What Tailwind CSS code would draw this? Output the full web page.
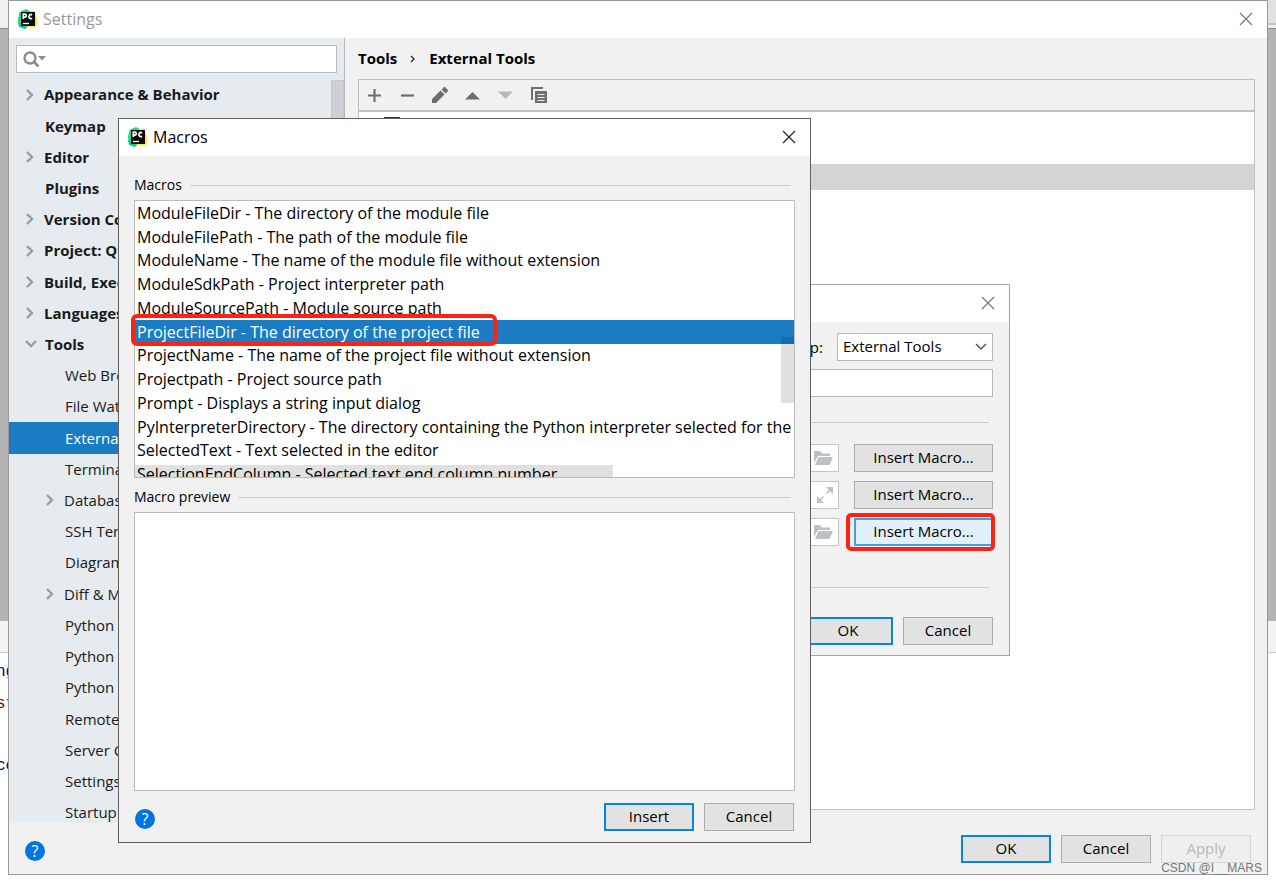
<!DOCTYPE html>
<html lang="en">
<head>
<meta charset="utf-8">
<title>Settings</title>
<script src="https://cdn.jsdelivr.net/npm/@tailwindcss/browser@4"></script>
</head>
<body class="relative h-screen overflow-hidden bg-white font-['Open_Sans','Noto_Sans',sans-serif] text-[15px] text-black">

<svg class="hidden" aria-hidden="true">
  <symbol id="pc" viewBox="0 0 20 20">
    <path d="M1.500 3 8 0l5 3-2 12-4 5-6-3L0 10z" fill="#21d789"/>
    <path d="M11 3l5-2 2 5 2 8-3 5-6-1-4 1 2-4z" fill="#f5ee3c"/>
    <path d="M0 13l6 1 3 4-2 2-6-2z" fill="#16c6a0"/>
    <rect x="3" y="3" width="14" height="14" fill="#0b0b0b"/>
    <path d="M5.300 10V5.200h1.500a1.400 1.400 0 0 1 0 2.900H5.400M14 6a2 2 0 1 0 0 3.200" fill="none" stroke="#fff" stroke-width="1.700"/>
    <path d="M5 14.500h6" stroke="#fff" stroke-width="1.300"/>
  </symbol>
  <symbol id="x" viewBox="0 0 14 14"><path d="M1 1l12 12M13 1 1 13" stroke="currentColor" stroke-width="1.200" fill="none"/></symbol>
  <symbol id="right" viewBox="0 0 8 12"><path d="M1 1l5 5-5 5" stroke="#9a9da0" stroke-width="2.400" fill="none"/></symbol>
  <symbol id="down" viewBox="0 0 12 8"><path d="M1 1l5 5 5-5" stroke="#9a9da0" stroke-width="2.400" fill="none"/></symbol>
  <symbol id="folder" viewBox="0 0 19 14"><path d="M0 0h6l2 2.500h8v2.500H4L0 12z" fill="#bcc1c5"/><path d="M4.500 6H19l-3.500 8H1z" fill="#bcc1c5"/></symbol>
</svg>

<!-- editor behind the windows -->
<div class="absolute inset-0 flex flex-col font-['Liberation_Mono',monospace] text-base" aria-hidden="true">
  <div class="flex h-7 justify-between bg-[#f0f0f0]"><span></span><span class="h-[25px] w-2 border-b-2 border-[#c4c4c4] bg-[#e2e2e2]"></span></div>
  <div class="h-[593px] border-t border-[#8c8c8c] bg-[#b4b4b4]"></div>
  <div class="h-8 border-b border-[#c9c9c9] bg-[#f3f3f3]"></div>
  <div class="flex w-2 flex-1 flex-col overflow-hidden pt-[3px]">
    <div class="-ml-1 h-8 text-[#000080] leading-8">ng</div>
    <div class="-ml-1 h-8 text-[#800000] leading-8">st</div>
    <div class="mt-[30px] -ml-1 h-8 text-[#000080] leading-8">co</div>
  </div>
</div>

<!-- Settings window -->
<section class="absolute inset-x-2 top-0 bottom-2 flex flex-col border border-[#999] bg-[#f1f1f1]">
  <header class="flex h-[37px] shrink-0 items-center bg-white pr-[14px] pb-px pl-[9px]">
    <svg class="size-5"><use href="#pc"/></svg>
    <h1 class="ml-[5px] flex-1 text-base text-[#999]">Settings</h1>
    <button aria-label="Close settings" class="text-[#777]"><svg class="size-[14px]"><use href="#x"/></svg></button>
  </header>
  <div class="flex min-h-0 flex-1">
    <nav class="relative flex w-[336px] shrink-0 flex-col overflow-hidden border-r border-[#b5b7b9] bg-[#e6ebef] text-[#1a1a1a]">
      <label class="mx-[7px] mt-[7px] flex h-7 shrink-0 items-center border border-[#b8bcbf] bg-white pl-[6px]">
        <svg class="h-4 w-[24px]" viewBox="0 0 24 16"><circle cx="7" cy="7" r="5.500" fill="none" stroke="#8c8c8c" stroke-width="2.400"/><path d="M11 11l4.500 4.500" stroke="#8c8c8c" stroke-width="2.600"/><path d="M15 5h8l-4 4.500z" fill="#8c8c8c"/></svg>
        <input aria-label="Search settings" class="min-w-0 flex-1 outline-none">
      </label>
      <ul class="-mb-[5px] mt-[6px] grid flex-1 auto-rows-fr whitespace-nowrap">
        <li class="flex items-center pl-[17px] font-bold"><svg class="mr-[10px] h-3 w-2"><use href="#right"/></svg>Appearance &amp; Behavior</li>
        <li class="flex items-center pl-9 font-bold">Keymap</li>
        <li class="flex items-center pl-[17px] font-bold"><svg class="mr-[10px] h-3 w-2"><use href="#right"/></svg>Editor</li>
        <li class="flex items-center pl-9 font-bold">Plugins</li>
        <li class="flex items-center pl-[17px] font-bold"><svg class="mr-[10px] h-3 w-2"><use href="#right"/></svg>Version Control</li>
        <li class="flex items-center pl-[17px] font-bold"><svg class="mr-[10px] h-3 w-2"><use href="#right"/></svg>Project: Qt</li>
        <li class="flex items-center pl-[17px] font-bold"><svg class="mr-[10px] h-3 w-2"><use href="#right"/></svg>Build, Execution, Deployment</li>
        <li class="flex items-center pl-[17px] font-bold"><svg class="mr-[10px] h-3 w-2"><use href="#right"/></svg>Languages &amp; Frameworks</li>
        <li class="flex items-center pl-4 font-bold"><svg class="mr-2 h-2 w-3"><use href="#down"/></svg>Tools</li>
        <li class="flex items-center pl-14">Web Browsers</li>
        <li class="flex items-center pl-14">File Watchers</li>
        <li class="flex items-center bg-[#1b7cc3] pl-14 text-white">External Tools</li>
        <li class="flex items-center pl-14">Terminal</li>
        <li class="flex items-center pl-[37px]"><svg class="mr-[10px] h-3 w-2"><use href="#right"/></svg>Database</li>
        <li class="flex items-center pl-14">SSH Terminal</li>
        <li class="flex items-center pl-14">Diagrams</li>
        <li class="flex items-center pl-[37px]"><svg class="mr-[10px] h-3 w-2"><use href="#right"/></svg>Diff &amp; Merge</li>
        <li class="flex items-center pl-14">Python</li>
        <li class="flex items-center pl-14">Python</li>
        <li class="flex items-center pl-14">Python</li>
        <li class="flex items-center pl-14">Remote</li>
        <li class="flex items-center pl-14">Server Certificates</li>
        <li class="flex items-center pl-14">Settings Repository</li>
        <li class="flex items-center pl-14">Startup Tasks</li>
      </ul>
      <div class="absolute top-[42px] right-0 h-[200px] w-[13px] border border-[#c4c8cb] bg-[#cdd1d5]"></div>
    </nav>
    <main class="flex min-w-0 flex-1 flex-col pr-3 pb-[13px] pl-[13px]">
      <h2 class="flex h-[41px] items-center font-bold">Tools<svg class="mx-[13px] h-2 w-[6px]" viewBox="0 0 6 8"><path d="M1 1l3 3-3 3" fill="none" stroke="#222" stroke-width="1.300"/></svg>External Tools</h2>
      <div class="flex h-8 shrink-0 items-center gap-[17px] border border-[#c0c0c0] pl-[7px] text-[#6e6e6e]">
        <button aria-label="Add"><svg class="size-4" viewBox="0 0 16 16"><path d="M8.500 2v13M2 8.500h13" stroke="currentColor" stroke-width="2.200"/></svg></button>
        <button aria-label="Remove"><svg class="size-4" viewBox="0 0 16 16"><path d="M2 8.500h13" stroke="currentColor" stroke-width="2.200"/></svg></button>
        <button aria-label="Edit"><svg class="size-4" viewBox="0 0 16 16"><path d="M0 16v-4l8.500-8.500 4 4L4 16zM9.500 2.500 12 0h1l3 3v1l-2.500 2.500z" fill="currentColor"/></svg></button>
        <button aria-label="Move up"><svg class="size-4" viewBox="0 0 16 16"><path d="M0 12.500 7.500 5 15 12.500z" fill="currentColor"/></svg></button>
        <button aria-label="Move down" class="text-[#b9b9b9]"><svg class="size-4" viewBox="0 0 16 16"><path d="M0 4.500h15L7.500 12z" fill="currentColor"/></svg></button>
        <button aria-label="Copy"><svg class="size-4" viewBox="0 0 16 16"><path d="M1 13V1h11" fill="none" stroke="currentColor" stroke-width="2"/><path d="M4 4h12v12H4z" fill="currentColor"/><path d="M6.500 7.500h7M6.500 10.500h7M6.500 13.500h7" stroke="#f1f1f1" stroke-width="1"/></svg></button>
      </div>
      <div class="flex-1 border border-[#c0c0c0] bg-white">
        <div class="h-[52px] pt-[5px] pl-[25px]"><div class="size-4 border-2 border-[#333]"></div></div>
        <div class="h-[26px] bg-[#d4d4d4]"></div>
      </div>
    </main>
  </div>
  <footer class="flex h-[51px] shrink-0 items-center gap-[10px] px-4">
    <button aria-label="Settings help" class="mt-1 mr-auto size-5 rounded-full bg-[#0074df] text-base leading-5 text-white">?</button>
    <button class="h-7 w-[90px] border-2 border-[#0a84e0] bg-[#e2e2e2] pb-px">OK</button>
    <button class="h-7 w-[90px] border border-[#adadad] bg-[#e2e2e2] pb-px">Cancel</button>
    <button disabled class="h-7 w-[90px] border border-[#d4d4d4] bg-[#efefef] pb-px text-[#b9b9b9]">Apply</button>
  </footer>
</section>
<p class="absolute right-[14px] bottom-[7px] font-['Liberation_Sans',sans-serif] text-xs leading-4 text-[#777]">CSDN @I__MARS</p>

<!-- Edit tool window -->
<section class="absolute top-[284px] left-[600px] flex w-[410px] flex-col border border-[#a5a5a5] bg-[#f1f1f1]">
  <header class="flex h-[37px] items-center justify-end bg-white pr-[14px] pb-px">
    <button aria-label="Close tool editor" class="text-[#777]"><svg class="size-[14px]"><use href="#x"/></svg></button>
  </header>
  <div class="flex flex-col pt-[11px] pr-4 pb-[10px]">
    <div class="flex items-center justify-end gap-[14px]">
      <label for="group">Group:</label>
      <span class="relative flex w-[156px]">
        <select id="group" class="h-7 w-full appearance-none border border-[#b8b8b8] bg-white pb-px pl-[5px]"><option>External Tools</option></select>
        <svg class="pointer-events-none absolute top-[10px] right-[6px] h-2 w-3" viewBox="0 0 12 8"><path d="M1 1l5 5 5-5" fill="none" stroke="#555" stroke-width="1.500"/></svg>
      </span>
    </div>
    <input aria-label="Description" class="mt-2 h-7 border border-[#b8b8b8] bg-white">
    <div class="mt-[25px] mr-1 h-px bg-[#ccc]"></div>
    <div class="mt-[21px] grid grid-cols-[1fr_139px] gap-x-[15px] gap-y-[9px]">
      <div class="flex h-7 items-center justify-end border border-[#c4c4c4] bg-white pr-[5px]"><svg class="h-[14px] w-[19px]"><use href="#folder"/></svg></div>
      <button class="h-7 border border-[#adadad] bg-[#e2e2e2] pb-px">Insert Macro...</button>
      <div class="flex h-7 items-center justify-end border border-[#c4c4c4] bg-white pr-[5px]"><svg class="size-4" viewBox="0 0 16 16"><path d="M9.500 6.500l4-4M6.500 9.500l-4 4" fill="none" stroke="#bcc1c5" stroke-width="1.600"/><path d="M9 0h7v7zM0 9v7h7z" fill="#bcc1c5"/></svg></div>
      <button class="h-7 border border-[#adadad] bg-[#e2e2e2] pb-px">Insert Macro...</button>
      <div class="flex h-7 items-center justify-end border border-[#c4c4c4] bg-white pr-[5px]"><svg class="h-[14px] w-[19px]"><use href="#folder"/></svg></div>
      <div class="relative flex">
        <button class="h-7 w-full border-2 border-[#4a9de0] bg-[#e2f0fa] pb-px">Insert Macro...</button>
        <div class="pointer-events-none absolute -top-[5px] -right-[2px] -bottom-[5px] -left-[8px] rounded-[5px] border-4 border-[#fb2414]"></div>
      </div>
    </div>
    <div class="mt-[41px] mr-1 h-px bg-[#ccc]"></div>
    <div class="mt-[29px] flex justify-end gap-[10px]">
      <button class="h-7 w-[90px] border-2 border-[#0a84e0] bg-[#e2e2e2] pb-px">OK</button>
      <button class="h-7 w-[90px] border border-[#adadad] bg-[#e2e2e2] pb-px">Cancel</button>
    </div>
  </div>
</section>

<!-- Macros window -->
<section class="absolute top-[118px] left-[118px] flex h-[725px] w-[693px] flex-col border border-[#5f5f5f] bg-[#f1f1f1]">
  <header class="flex h-[37px] shrink-0 items-center bg-white pr-[14px] pb-px pl-[9px]">
    <svg class="size-5"><use href="#pc"/></svg>
    <h1 class="ml-[5px] flex-1 text-base">Macros</h1>
    <button aria-label="Close macros" class="text-[#222]"><svg class="size-[14px]"><use href="#x"/></svg></button>
  </header>
  <div class="flex min-h-0 flex-1 flex-col px-[15px] pt-5">
    <h2 class="flex h-[18px] shrink-0 items-center gap-2 pr-1 text-sm">Macros<span class="h-px flex-1 bg-[#ccc]"></span></h2>
    <div class="relative mt-[6px] flex-1">
      <div class="flex h-full flex-col overflow-hidden border border-[#bbb] bg-white">
        <ul class="-mb-[9px] grid flex-1 auto-rows-fr text-base leading-5 whitespace-nowrap">
          <li class="flex items-center pl-[2px]">ModuleFileDir - The directory of the module file</li>
          <li class="flex items-center pl-[2px]">ModuleFilePath - The path of the module file</li>
          <li class="flex items-center pl-[2px]">ModuleName - The name of the module file without extension</li>
          <li class="flex items-center pl-[2px]">ModuleSdkPath - Project interpreter path</li>
          <li class="flex items-center pl-[2px]">ModuleSourcePath - Module source path</li>
          <li class="flex items-center bg-[#1b7cc3] pl-[2px] text-white">ProjectFileDir - The directory of the project file</li>
          <li class="flex items-center pl-[2px]">ProjectName - The name of the project file without extension</li>
          <li class="flex items-center pl-[2px]">Projectpath - Project source path</li>
          <li class="flex items-center pl-[2px]">Prompt - Displays a string input dialog</li>
          <li class="flex items-center pl-[2px]">PyInterpreterDirectory - The directory containing the Python interpreter selected for the project</li>
          <li class="flex items-center pl-[2px]">SelectedText - Text selected in the editor</li>
          <li class="flex items-center pl-[2px]">SelectionEndColumn - Selected text end column number</li>
        </ul>
      </div>
      <div class="absolute right-[1px] bottom-[75px] h-[66px] w-[13px] bg-black/12"></div>
      <div class="absolute bottom-px left-px h-3 w-[478px] bg-black/12"></div>
      <div class="absolute top-[114px] -left-[3px] h-8 w-[366px] rounded-[6px] border-4 border-[#fb2414]"></div>
    </div>
    <h2 class="mt-[10px] flex h-[18px] shrink-0 items-center gap-2 pr-1 text-sm"><label for="preview">Macro preview</label><span class="h-px flex-1 bg-[#ccc]"></span></h2>
    <textarea id="preview" class="mt-[6px] h-[279px] shrink-0 resize-none border border-[#bbb] bg-white"></textarea>
  </div>
  <footer class="flex h-[51px] shrink-0 items-center gap-[10px] px-4">
    <button aria-label="Macros help" class="mt-1 mr-auto size-5 rounded-full bg-[#0074df] text-base leading-5 text-white">?</button>
    <button class="h-7 w-[90px] border-2 border-[#0a84e0] bg-[#e2e2e2] pb-px">Insert</button>
    <button class="h-7 w-[90px] border border-[#adadad] bg-[#e2e2e2] pb-px">Cancel</button>
  </footer>
</section>
</body>
</html>
